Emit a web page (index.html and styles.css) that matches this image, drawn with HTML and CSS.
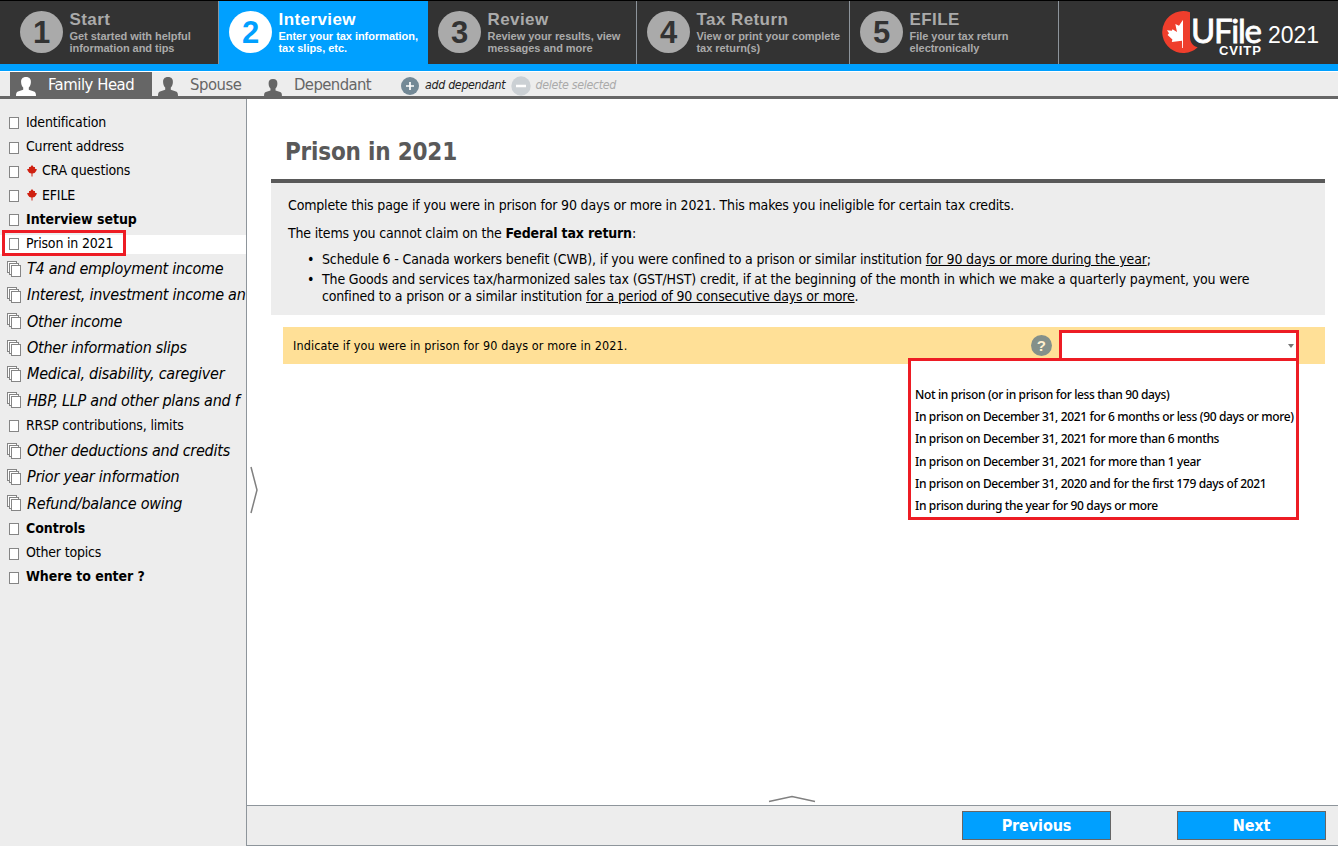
FILE: index.html
```
<!DOCTYPE html>
<html lang="en">
<head>
<meta charset="utf-8">
<title>UFile CVITP 2021</title>
<link rel="stylesheet" href="styles.css">
</head>
<body>
<svg class="defs" width="0" height="0">
  <symbol id="person" viewBox="0 0 20 19"><path d="M10 0C6.400 0 4.900 2.200 5.100 5.200C5.200 8 6.200 9.400 7.200 10.600V12.800L2 14.400C.5 15 0 16.200 0 19H20C20 16.200 19.500 15 18 14.400L12.800 12.800V10.600C13.800 9.400 14.800 8 14.900 5.200C15.100 2.200 13.600 0 10 0Z"/></symbol>
  <symbol id="page" viewBox="0 0 15 16"><rect x="2.5" y="3.5" width="9" height="11"/></symbol>
  <symbol id="pages" viewBox="0 0 15 16"><rect x=".5" y=".5" width="9" height="11"/><rect x="2.5" y="2.5" width="9" height="11"/><rect x="4.5" y="4.5" width="9" height="11"/></symbol>
  <symbol id="leaf" viewBox="0 0 10 12"><path d="M5 0L6.600 2L8 1.900L7.900 3.800L10 4.200L9 6.300L7.600 8L5.500 8.600V11.500H4.500V8.600L2.400 8L1 6.300L0 4.200L2.100 3.800L2 1.900L3.400 2Z"/></symbol>
</svg>
<header class="top">
  <div class="step s1"><b class="num">1</b><div><h2>Start</h2><p>Get started with helpful<br>information and tips</p></div></div>
  <div class="step s2 active"><b class="num">2</b><div><h2>Interview</h2><p>Enter your tax information,<br>tax slips, etc.</p></div></div>
  <div class="step s3"><b class="num">3</b><div><h2>Review</h2><p>Review your results, view<br>messages and more</p></div></div>
  <div class="step s4"><b class="num">4</b><div><h2>Tax Return</h2><p>View or print your complete<br>tax return(s)</p></div></div>
  <div class="step s5"><b class="num">5</b><div><h2>EFILE</h2><p>File your tax return<br>electronically</p></div></div>
  <div class="brand">
    <svg width="36" height="44" viewBox="0 0 36 44"><path fill="#ef3e2c" d="M28 2.200A21 21 0 1 0 35.700 37.300C31 36 28 32.500 28 27Z"/><path fill="#fff" d="M20.700 10.300L17 15.800L13.300 14L15 22L10.500 19.300L9.800 20.800L5 20.300L7 23.300L5.600 25L10.400 29.600L9.800 32L20 30.800L20.200 38H21V10.300Z"/></svg>
    <div class="logo"><span class="ufile">UFile</span><span class="cvitp">CVITP</span></div>
    <span class="year">2021</span>
  </div>
</header>
<nav class="people">
  <div class="tab t1 on"><svg width="20" height="19"><use href="#person"/></svg><span>Family Head</span></div>
  <div class="tab t2"><svg width="20" height="19"><use href="#person"/></svg><span>Spouse</span></div>
  <div class="tab t3"><svg width="18" height="17"><use href="#person"/></svg><span>Dependant</span></div>
  <div class="act add"><svg width="18" height="18" viewBox="0 0 18 18"><circle cx="9" cy="9" r="9" fill="#738996"/><path d="M9 5V13M5 9H13" stroke="#fff" stroke-width="1.700"/></svg><span>add dependant</span></div>
  <div class="act del"><svg width="20" height="20" viewBox="0 0 20 20"><circle cx="10" cy="10" r="9.700" fill="#cbd0d4"/><path d="M5 10H15" stroke="#fff" stroke-width="2.500"/></svg><span>delete selected</span></div>
</nav>
<div class="body">
  <ul class="side">
    <li><svg><use href="#page"/></svg><span>Identification</span></li>
    <li><svg><use href="#page"/></svg><span>Current address</span></li>
    <li><svg><use href="#page"/></svg><svg class="leaf"><use href="#leaf"/></svg><span>CRA questions</span></li>
    <li><svg><use href="#page"/></svg><svg class="leaf"><use href="#leaf"/></svg><span>EFILE</span></li>
    <li class="bold"><svg><use href="#page"/></svg><span>Interview setup</span></li>
    <li class="sel"><svg><use href="#page"/></svg><span>Prison in 2021</span></li>
    <li class="multi"><svg><use href="#pages"/></svg><span>T4 and employment income</span></li>
    <li class="multi"><svg><use href="#pages"/></svg><span>Interest, investment income an</span></li>
    <li class="multi"><svg><use href="#pages"/></svg><span>Other income</span></li>
    <li class="multi"><svg><use href="#pages"/></svg><span>Other information slips</span></li>
    <li class="multi"><svg><use href="#pages"/></svg><span>Medical, disability, caregiver</span></li>
    <li class="multi"><svg><use href="#pages"/></svg><span>HBP, LLP and other plans and f</span></li>
    <li><svg><use href="#page"/></svg><span>RRSP contributions, limits</span></li>
    <li class="multi"><svg><use href="#pages"/></svg><span>Other deductions and credits</span></li>
    <li class="multi"><svg><use href="#pages"/></svg><span>Prior year information</span></li>
    <li class="multi"><svg><use href="#pages"/></svg><span>Refund/balance owing</span></li>
    <li class="bold"><svg><use href="#page"/></svg><span>Controls</span></li>
    <li><svg><use href="#page"/></svg><span>Other topics</span></li>
    <li class="bold"><svg><use href="#page"/></svg><span>Where to enter ?</span></li>
  </ul>
  <div class="right">
    <svg class="grip-v" width="8" height="48" viewBox="0 0 8 48"><path d="M1 1L7 24L1 47"/></svg>
    <main>
      <h1>Prison in 2021</h1>
      <section class="info">
        <p>Complete this page if you were in prison for 90 days or more in 2021. This makes you ineligible for certain tax credits.</p>
        <p>The items you cannot claim on the <b>Federal tax return</b>:</p>
        <ul>
          <li>Schedule 6 - Canada workers benefit (CWB), if you were confined to a prison or similar institution <u>for 90 days or more during the year</u>;</li>
          <li>The Goods and services tax/harmonized sales tax (GST/HST) credit, if at the beginning of the month in which we make a quarterly payment, you were<br><span class="last">confined to a prison or a similar institution <u>for a period of 90 consecutive days or more</u>.</span></li>
        </ul>
      </section>
      <div class="question">
        <span class="q">Indicate if you were in prison for 90 days or more in 2021.</span>
        <span class="help">?</span>
        <div class="select"><svg width="6" height="4"><path d="M0 0H6L3 4Z" fill="#767676"/></svg>
          <ul class="menu">
            <li></li>
            <li>Not in prison (or in prison for less than 90 days)</li>
            <li>In prison on December 31, 2021 for 6 months or less (90 days or more)</li>
            <li>In prison on December 31, 2021 for more than 6 months</li>
            <li>In prison on December 31, 2021 for more than 1 year</li>
            <li>In prison on December 31, 2020 and for the first 179 days of 2021</li>
            <li>In prison during the year for 90 days or more</li>
          </ul>
        </div>
      </div>
    </main>
    <svg class="grip-h" width="48" height="8" viewBox="0 0 48 8"><path d="M1 6.500L24 1.500L47 6.500"/></svg>
    <footer><button>Previous</button><button>Next</button></footer>
  </div>
</div>
</body>
</html>
```
FILE: styles.css
```
*, *::before, *::after { box-sizing: border-box; margin: 0; padding: 0; }
body { width: 1338px; height: 846px; overflow: hidden; display: flex; flex-direction: column; background: #fff; color: #000; font: 14px/17px "DejaVu Sans Condensed", "DejaVu Sans", sans-serif; font-stretch: condensed; white-space: nowrap; }
.defs { position: absolute; }
ul { list-style: none; }
.top { height: 71px; flex: none; display: flex; background: #333; border-top: 1px solid #000; border-bottom: 7px solid #00a0ff; font-family: "Liberation Sans", Arial, sans-serif; }
.step { display: flex; gap: 6.500px; padding: 10px 0 0 10px; border-right: 1px solid #8d949b; color: #aaa; width: 210px; }
.step.s1 { width: 219px; padding-left: 20px; }
.step.s2 { width: 209px; border-right: 0; }
.step.s3 { width: 209px; }
.step.s4 { width: 213px; }
.step.s5 { width: 209px; }
.num { width: 43px; height: 42px; border-radius: 50%; background: #aaa; color: #333; font-size: 31px; line-height: 43px; text-align: center; }
.step.active { background: #00a0ff; color: #fff; }
.active .num { background: #fff; color: #00a0ff; }
.step h2 { font-size: 17px; line-height: 18px; letter-spacing: .42px; }
.step p { font-size: 11px; font-weight: bold; line-height: 12px; margin-top: 1px; letter-spacing: -.04px; }
.brand { margin-left: 103px; padding-top: 9px; display: flex; color: #fff; }
.logo { display: flex; flex-direction: column; margin-left: -7px; width: 72px; }
.ufile { font: 400 33px/36px Lato, sans-serif; letter-spacing: -1.300px; margin-top: 2px; -webkit-text-stroke: .8px #fff; }
.cvitp { font-size: 13px; font-weight: bold; line-height: 12px; letter-spacing: .9px; margin: -3px 0 0 28px; }
.year { font-size: 23px; line-height: 28px; margin: 11px 0 0 5px; }
.people { height: 28px; flex: none; display: flex; background: #ededed; border-top: 1px solid #fff; border-bottom: 3px solid #666; padding-left: 10px; color: #666; font-size: 16.500px; letter-spacing: -.45px; }
.tab { display: flex; align-items: flex-end; height: 24px; fill: #666; gap: 12px; }
.tab span { line-height: 22px; height: 23px; padding-top: 1px; }
.t1 { width: 142px; padding-left: 6px; }
.t2 { width: 111px; padding-left: 6px; }
.t3 { width: 138px; padding-left: 1px; letter-spacing: -.58px; }
.on { background: #666; color: #fff; fill: #fff; }
.act { display: flex; align-items: center; gap: 6px; font-size: 12.300px; font-style: italic; letter-spacing: -.3px; color: #222; height: 27px; }
.add { width: 110px; }
.del { color: #aaa; gap: 4.500px; }
.body { flex: 1; display: flex; min-height: 0; }
.side { width: 247px; flex: none; background: #ededed; border-right: 1px solid #8e959b; padding-top: 11.400px; overflow: hidden; letter-spacing: -.18px; }
.side li { height: 24.200px; display: flex; align-items: center; padding-left: 7px; }
.side li svg { width: 15px; height: 16px; flex: none; margin-right: 4px; fill: #fff; stroke: #858585; }
.side li .leaf { width: 10px; height: 12px; fill: #cf2010; stroke: none; margin: 0 5px 0 1px; }
.side .bold { font-weight: bold; letter-spacing: -.05px; }
.side .multi { height: 26.300px; font-size: 16px; font-style: italic; letter-spacing: -.25px; }
.side .multi svg { margin-right: 5px; }
.side .sel { background: linear-gradient(#fff, #fff) 0 3.600px / 100% 19px no-repeat; position: relative; }
.side .sel::after { content: ""; position: absolute; left: 2px; top: -1.400px; width: 124px; height: 26px; border: 3px solid #ed1c24; }
.right { flex: 1; position: relative; display: flex; flex-direction: column; }
.grip-v, .grip-h { position: absolute; fill: none; stroke: #808080; stroke-width: 1.500; }
.grip-v { left: 3px; top: 367px; }
.grip-h { left: 521px; top: 696px; }
main { flex: 1; padding: 38px 13px 0 24px; }
h1 { font-size: 24px; line-height: 30px; color: #595959; padding-left: 14px; margin-bottom: 12px; letter-spacing: -.2px; }
.info { border-top: 4px solid #595959; background: #ededed; height: 136px; padding: 14px 17px 0; letter-spacing: -.168px; }
.info p { margin-bottom: 11px; }
.info ul { margin-top: -2px; padding-left: 34px; letter-spacing: -.142px; }
.info li { position: relative; margin-bottom: 3px; }
.info .last { letter-spacing: -.172px; }
.info li::before { content: "•"; position: absolute; left: -15px; }
.question { margin: 12px 0 0 12px; height: 37px; background: #ffe097; display: flex; align-items: center; padding-left: 10px; font-size: 12.500px; letter-spacing: .12px; }
.help { margin-left: auto; width: 21px; height: 21px; border-radius: 50%; background: #84908a; color: #fff0d0; font: bold 15px/21px "Liberation Sans", sans-serif; text-align: center; margin-right: 7px; }
.select { position: relative; width: 240px; height: 31px; background: #fff; border: 3px solid #ed1c24; margin-right: 26px; display: flex; align-items: center; justify-content: flex-end; padding-right: 2px; }
.menu { position: absolute; right: -3px; top: 25px; width: 391px; height: 162px; border: 3px solid #ed1c24; background: #fff; padding: 0 4px; font: 500 12px/22.200px "Noto Sans", sans-serif; letter-spacing: -.35px; }
.menu li { height: 22.200px; }
.menu li:first-child { height: 23px; }
footer { height: 41px; background: #ededed; border-top: 1px solid #8e959b; border-bottom: 1px solid #8e959b; display: flex; justify-content: flex-end; gap: 66px; padding: 5px 12px 0 0; }
button { width: 149px; height: 29px; background: #00a0ff; border: 1px solid #666; color: #fff; font: bold 16px/20px "DejaVu Sans Condensed", sans-serif; letter-spacing: -.1px; }
```
